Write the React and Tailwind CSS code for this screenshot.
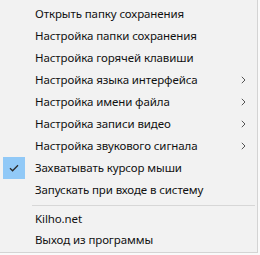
const items = [
  { label: "Открыть папку сохранения" },
  { label: "Настройка папки сохранения" },
  { label: "Настройка горячей клавиши" },
  { label: "Настройка языка интерфейса", sub: true },
  { label: "Настройка имени файла", sub: true },
  { label: "Настройка записи видео", sub: true },
  { label: "Настройка звукового сигнала", sub: true },
  { label: "Захватывать курсор мыши", checked: true },
  { label: "Запускать при входе в систему" },
];

function Row({ label, sub, checked, h = "h-[22px]" }) {
  return (
    <div className={`flex items-center ${h}`}>
      <div className="w-[22px] h-full flex items-center justify-center ml-[3px]">
        {checked && (
          <div className="w-[22px] h-full bg-[#91c9f7] flex items-center justify-center">
            <svg width="10" height="8" viewBox="0 0 10 8" fill="none">
              <path d="M1 4.2 L3.6 6.8 L9 1.2" stroke="#2b2b2b" strokeWidth="1.3" />
            </svg>
          </div>
        )}
      </div>
      <span className="ml-[10px] flex-1 text-[11.5px] tracking-[-0.1px] text-[#111] leading-none">{label}</span>
      {sub && (
        <svg className="mr-[11px]" width="5" height="8" viewBox="0 0 5 8" fill="none">
          <path d="M0.8 0.8 L4 4 L0.8 7.2" stroke="#555" strokeWidth="1" />
        </svg>
      )}
    </div>
  );
}

export default function App() {
  return (
    <div className="w-[260px] h-[255px] bg-[#fafafa] font-['Noto_Sans',sans-serif]">
      <div className="w-[258px] h-[253px] bg-[#f2f2f2] border-r border-b border-[#d4d4d4] pt-[3px]">
        {items.map((it) => (
          <Row key={it.label} {...it} />
        ))}
        <div className="h-[7px] flex items-start pl-[32px] pr-[2px] pt-[4px]">
          <div className="h-px w-full bg-[#d7d7d7]" />
        </div>
        <Row label="Kilho.net" h="h-[21px]" />
        <Row label="Выход из программы" h="h-[21px]" />
      </div>
    </div>
  );
}
